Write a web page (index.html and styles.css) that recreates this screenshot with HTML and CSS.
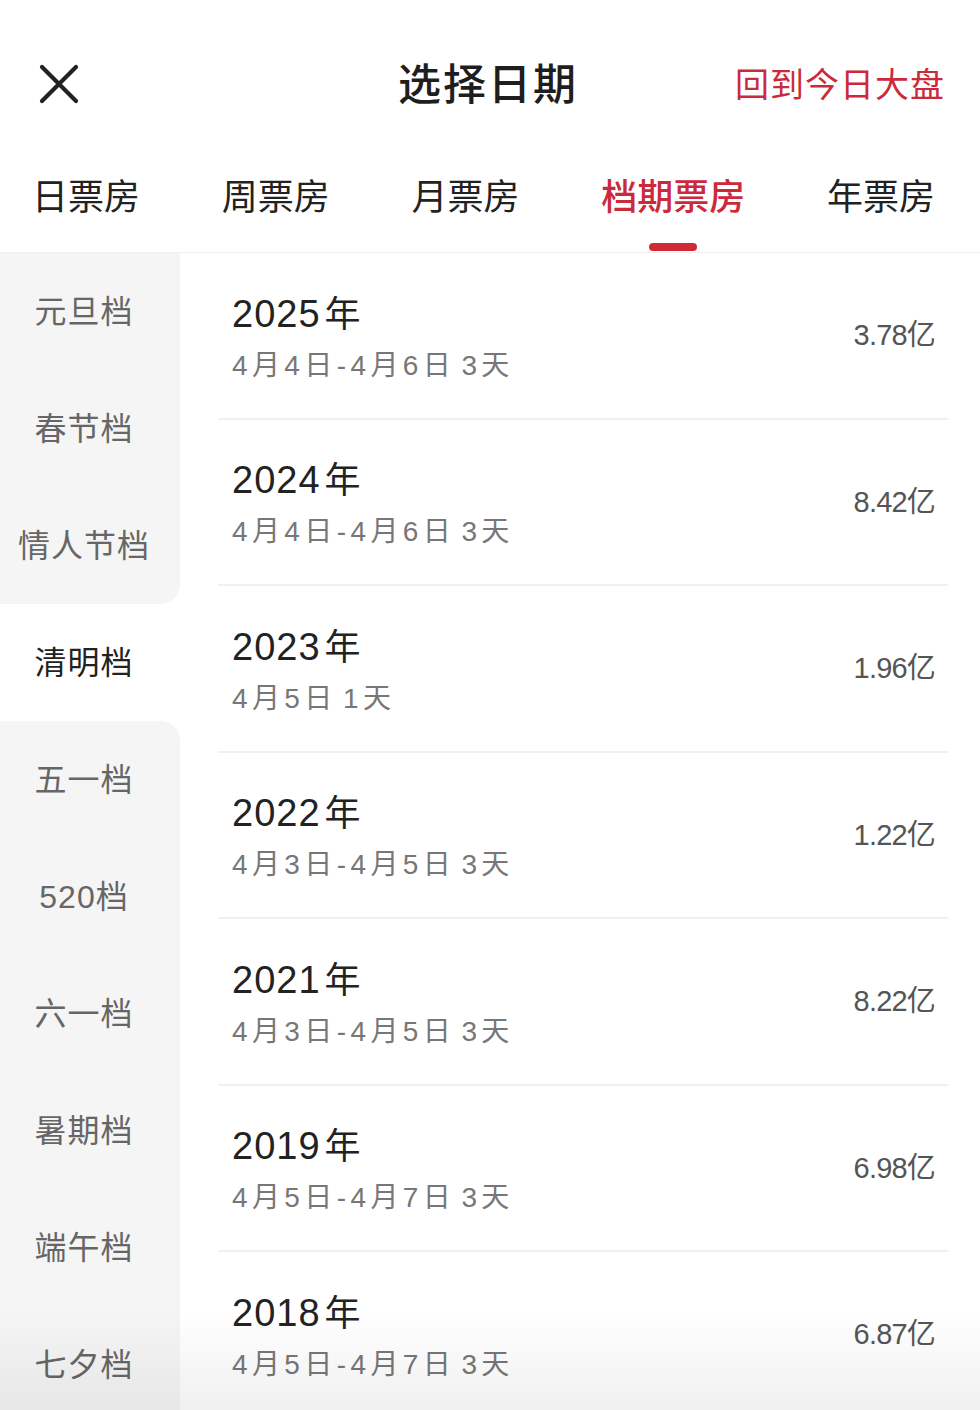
FILE: index.html
```html
<!DOCTYPE html>
<html lang="zh-CN">
<head>
    <meta charset="UTF-8">
    <meta name="viewport" content="width=device-width, initial-scale=1.0">
    <title>选择日期</title>
    <link rel="stylesheet" href="styles.css">
</head>
<body>
    <div class="page">
        <div class="topbar">
            <div class="close-btn">
                <svg width="40" height="40" viewBox="0 0 40 40"><path d="M3 3 L37 37 M37 3 L3 37" stroke="#222" stroke-width="4.2" stroke-linecap="round" fill="none"/></svg>
            </div>
            <h1 class="title">选择日期</h1>
            <a class="back-today">回到今日大盘</a>
        </div>

        <div class="tabs">
            <div class="tab">日票房</div>
            <div class="tab">周票房</div>
            <div class="tab">月票房</div>
            <div class="tab active">档期票房</div>
            <div class="tab">年票房</div>
        </div>

        <div class="body">
            <div class="sidebar">
                <div class="side-item">元旦档</div>
                <div class="side-item">春节档</div>
                <div class="side-item pre">情人节档</div>
                <div class="side-item active">清明档</div>
                <div class="side-item next">五一档</div>
                <div class="side-item">520档</div>
                <div class="side-item">六一档</div>
                <div class="side-item">暑期档</div>
                <div class="side-item">端午档</div>
                <div class="side-item">七夕档</div>
            </div>

            <div class="list">
                <div class="row">
                    <div class="row-info">
                        <div class="row-year">2025<span class="unit">年</span></div>
                        <div class="row-date">4月4日-4月6日 3天</div>
                    </div>
                    <div class="row-value">3.78亿</div>
                </div>
                <div class="row">
                    <div class="row-info">
                        <div class="row-year">2024<span class="unit">年</span></div>
                        <div class="row-date">4月4日-4月6日 3天</div>
                    </div>
                    <div class="row-value">8.42亿</div>
                </div>
                <div class="row">
                    <div class="row-info">
                        <div class="row-year">2023<span class="unit">年</span></div>
                        <div class="row-date">4月5日 1天</div>
                    </div>
                    <div class="row-value">1.96亿</div>
                </div>
                <div class="row">
                    <div class="row-info">
                        <div class="row-year">2022<span class="unit">年</span></div>
                        <div class="row-date">4月3日-4月5日 3天</div>
                    </div>
                    <div class="row-value">1.22亿</div>
                </div>
                <div class="row">
                    <div class="row-info">
                        <div class="row-year">2021<span class="unit">年</span></div>
                        <div class="row-date">4月3日-4月5日 3天</div>
                    </div>
                    <div class="row-value">8.22亿</div>
                </div>
                <div class="row">
                    <div class="row-info">
                        <div class="row-year">2019<span class="unit">年</span></div>
                        <div class="row-date">4月5日-4月7日 3天</div>
                    </div>
                    <div class="row-value">6.98亿</div>
                </div>
                <div class="row">
                    <div class="row-info">
                        <div class="row-year">2018<span class="unit">年</span></div>
                        <div class="row-date">4月5日-4月7日 3天</div>
                    </div>
                    <div class="row-value">6.87亿</div>
                </div>
            </div>
        </div>

        <div class="bottom-fade"></div>
    </div>
</body>
</html>
```

FILE: styles.css
```css
* { margin: 0; padding: 0; box-sizing: border-box; }
html, body { height: 100%; overflow: hidden; }
body { font-family: "Liberation Sans", "Noto Sans CJK SC", sans-serif; background: #fff; color: #222; }
.page { position: relative; width: 980px; height: 1410px; overflow: hidden; }

/* top bar */
.topbar { display: grid; grid-template-columns: 1fr auto 1fr; align-items: center; height: 168px; padding: 0 35px 0 39px; }
.close-btn { display: flex; align-items: center; }
.close-btn svg { display: block; }
.title { font-family: "Noto Sans CJK SC", sans-serif; font-size: 43px; font-weight: 500; color: #1e1e1e; letter-spacing: 2px; margin: 0 0 6px -8px; }
.back-today { justify-self: end; font-family: "Noto Sans CJK SC", sans-serif; font-size: 34px; color: #cc2a3c; letter-spacing: 1px; margin-bottom: 4px; }

/* tabs */
.tabs { display: flex; justify-content: space-between; height: 85px; padding: 3px 45px 0 32px; border-bottom: 1px solid #efefef; }
.tab { position: relative; font-family: "Noto Sans CJK SC", sans-serif; font-size: 36px; line-height: 46px; height: 81px; color: #222; }
.tab.active { color: #cc2a3c; font-weight: 500; }
.tab.active::after { content: ''; position: absolute; left: 50%; bottom: 1px; width: 48px; height: 8px; margin-left: -24px; border-radius: 4px; background: #d02a36; }

/* body */
.body { display: flex; }
.sidebar { width: 180px; flex-shrink: 0; }
.side-item { height: 117px; display: flex; align-items: center; justify-content: center; padding: 0 12px 6px 0; background: #f5f5f5; font-family: "Liberation Sans", "Noto Sans CJK SC", sans-serif; font-size: 32px; color: #666; letter-spacing: 1px; }
.side-item.active { background: #fff; color: #222; }
.side-item.pre { border-bottom-right-radius: 20px; }
.side-item.next { border-top-right-radius: 20px; }

.list { flex: 1; padding: 0 32px 0 38px; }
.row { display: flex; justify-content: space-between; align-items: center; height: 166.5px; padding: 0 13px 0 14px; border-bottom: 2px solid #f0f0f0; }
.row-year { font-size: 38px; line-height: 46px; color: #222; letter-spacing: 1px; }
.row-year .unit { font-family: "Noto Sans CJK SC", sans-serif; margin-left: 4px; font-size: 36px; }
.row-date { margin-top: 12px; font-size: 28px; line-height: 34px; color: #777; letter-spacing: 4.4px; word-spacing: -6px; }
.row-value { font-family: "Liberation Sans Narrow", "Liberation Sans", "Noto Sans CJK SC", sans-serif; font-size: 29px; color: #555; letter-spacing: -0.8px; margin-bottom: 6px; }

.bottom-fade { position: absolute; left: 0; right: 0; bottom: 0; height: 100px; background: linear-gradient(rgba(0, 0, 0, 0), rgba(0, 0, 0, 0.06)); pointer-events: none; }
```
